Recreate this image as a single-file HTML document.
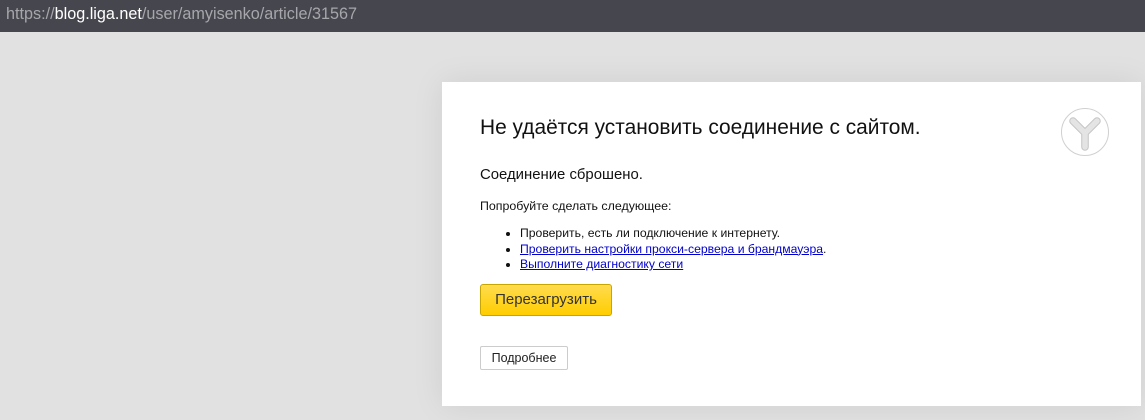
<!DOCTYPE html>
<html><head><meta charset="utf-8"><style>
body{margin:0;width:1145px;height:420px;overflow:hidden;background:#e1e1e1;font-family:"Liberation Sans",Arial,sans-serif;position:relative}
.bar{position:absolute;left:0;top:0;width:1145px;height:32px;background:#46464e;color:#a6a6ab;font-size:16.2px;line-height:28px;padding-left:6px;box-sizing:border-box}
.bar b{color:#fff;font-weight:normal}
.panel{position:absolute;left:442px;top:82px;width:699px;height:324px;background:#fff;box-shadow:0 0 30px rgba(0,0,0,0.08)}
h1{position:absolute;left:38px;top:34px;margin:0;font-weight:normal;font-size:20.9px;color:#111;white-space:nowrap}
.p1{position:absolute;left:38px;top:85px;font-size:14.9px;color:#111}
.p2{position:absolute;left:38px;top:117px;font-size:12.4px;color:#111;white-space:nowrap}
ul{position:absolute;left:38px;top:144px;margin:0;padding-left:40px;font-size:12.2px;line-height:15.5px;color:#111;white-space:nowrap}
a{color:#00c;}
.btn{position:absolute;left:38px;top:202px;width:132px;height:32px;box-sizing:border-box;border:1px solid #c8a600;border-radius:3px;background:linear-gradient(#ffdc4d,#ffcd00);font-size:15px;line-height:30px;text-align:center;color:#333}
.btn2{position:absolute;left:38px;top:264px;width:88px;height:24px;box-sizing:border-box;border:1px solid #ccc;border-radius:2px;background:#fff;font-size:12.5px;line-height:22px;text-align:center;color:#222}
</style></head><body>
<div class="bar">https://<b>blog.liga.net</b>/user/amyisenko/article/31567</div>
<div class="panel">
<h1>Не удаётся установить соединение с сайтом.</h1>
<div class="p1">Соединение сброшено.</div>
<div class="p2">Попробуйте сделать следующее:</div>
<ul><li>Проверить, есть ли подключение к интернету.</li><li><a href="#">Проверить настройки прокси-сервера и брандмауэра</a>.</li><li><a href="#">Выполните диагностику сети</a></li></ul>
<div class="btn">Перезагрузить</div>
<div class="btn2">Подробнее</div>
<svg style="position:absolute;left:618px;top:26px" width="50" height="50" viewBox="0 0 50 50">
<circle cx="25" cy="24" r="23.5" fill="#fff" stroke="#d0d0d0" stroke-width="1"/>
<path d="M13 13 L25 25 L37 13 M25 25 L25 39" fill="none" stroke="#c4c4c4" stroke-width="7.5" stroke-linecap="round" stroke-linejoin="round"/>
<path d="M13 13 L25 25 L37 13 M25 25 L25 39" fill="none" stroke="#e4e4e4" stroke-width="5.5" stroke-linecap="round" stroke-linejoin="round"/>
</svg>
</div>
</body></html>
